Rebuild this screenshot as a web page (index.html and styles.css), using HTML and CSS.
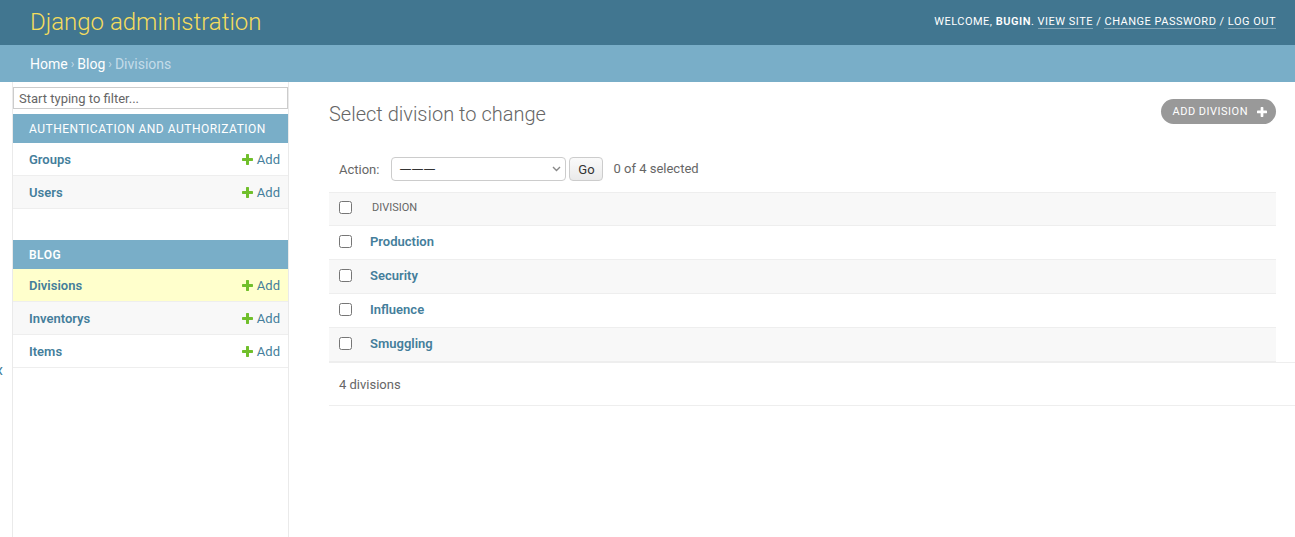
FILE: index.html
```html
<!DOCTYPE html>
<html lang="en">
<head>
<meta charset="utf-8">
<title>Select division to change | Django site admin</title>
<link rel="stylesheet" href="styles.css">
</head>
<body>
<header class="header">
  <div class="branding">Django administration</div>
  <div class="user-tools">
    Welcome, <strong>bugin</strong>.
    <a href="#">View site</a> /
    <a href="#">Change password</a> /
    <a href="#">Log out</a>
  </div>
</header>
<nav class="breadcrumbs">
  <a href="#">Home</a><span class="sep">›</span><a href="#">Blog</a><span class="sep">›</span><span>Divisions</span>
</nav>
<div class="main">
  <button class="toggle"><span class="toggle-glyph">«</span></button>
  <aside class="sidebar">
    <input class="filter" type="search" placeholder="Start typing to filter...">
    <div class="module">
      <div class="caption">Authentication and Authorization</div>
      <div class="app-row"><a class="model" href="#">Groups</a><a class="addlink" href="#"><svg width="11" height="11" viewBox="192 192 1408 1408"><path fill="#70bf2b" d="M1600 796v192q0 40-28 68t-68 28h-416v416q0 40-28 68t-68 28h-192q-40 0-68-28t-28-68v-416h-416q-40 0-68-28t-28-68v-192q0-40 28-68t68-28h416v-416q0-40 28-68t68-28h192q40 0 68 28t28 68v416h416q40 0 68 28t28 68z"/></svg>Add</a></div>
      <div class="app-row alt"><a class="model" href="#">Users</a><a class="addlink" href="#"><svg width="11" height="11" viewBox="192 192 1408 1408"><path fill="#70bf2b" d="M1600 796v192q0 40-28 68t-68 28h-416v416q0 40-28 68t-68 28h-192q-40 0-68-28t-28-68v-416h-416q-40 0-68-28t-28-68v-192q0-40 28-68t68-28h416v-416q0-40 28-68t68-28h192q40 0 68 28t28 68v416h416q40 0 68 28t28 68z"/></svg>Add</a></div>
    </div>
    <div class="module">
      <div class="caption bold">Blog</div>
      <div class="app-row current"><a class="model" href="#">Divisions</a><a class="addlink" href="#"><svg width="11" height="11" viewBox="192 192 1408 1408"><path fill="#70bf2b" d="M1600 796v192q0 40-28 68t-68 28h-416v416q0 40-28 68t-68 28h-192q-40 0-68-28t-28-68v-416h-416q-40 0-68-28t-28-68v-192q0-40 28-68t68-28h416v-416q0-40 28-68t68-28h192q40 0 68 28t28 68v416h416q40 0 68 28t28 68z"/></svg>Add</a></div>
      <div class="app-row alt"><a class="model" href="#">Inventorys</a><a class="addlink" href="#"><svg width="11" height="11" viewBox="192 192 1408 1408"><path fill="#70bf2b" d="M1600 796v192q0 40-28 68t-68 28h-416v416q0 40-28 68t-68 28h-192q-40 0-68-28t-28-68v-416h-416q-40 0-68-28t-28-68v-192q0-40 28-68t68-28h416v-416q0-40 28-68t68-28h192q40 0 68 28t28 68v416h416q40 0 68 28t28 68z"/></svg>Add</a></div>
      <div class="app-row"><a class="model" href="#">Items</a><a class="addlink" href="#"><svg width="11" height="11" viewBox="192 192 1408 1408"><path fill="#70bf2b" d="M1600 796v192q0 40-28 68t-68 28h-416v416q0 40-28 68t-68 28h-192q-40 0-68-28t-28-68v-416h-416q-40 0-68-28t-28-68v-192q0-40 28-68t68-28h416v-416q0-40 28-68t68-28h192q40 0 68 28t28 68v416h416q40 0 68 28t28 68z"/></svg>Add</a></div>
    </div>
  </aside>
  <main class="content">
    <div class="title-row">
      <h1 class="title">Select division to change</h1>
      <a class="add-button" href="#">Add division<svg width="10" height="10" viewBox="192 192 1408 1408"><path fill="#fff" d="M1600 796v192q0 40-28 68t-68 28h-416v416q0 40-28 68t-68 28h-192q-40 0-68-28t-28-68v-416h-416q-40 0-68-28t-28-68v-192q0-40 28-68t68-28h416v-416q0-40 28-68t68-28h192q40 0 68 28t28 68v416h416q40 0 68 28t28 68z"/></svg></a>
    </div>
    <div class="actions">
      <label class="action-label">Action:</label>
      <span class="select-wrap">
        <select class="action-select"><option>———</option></select>
        <svg class="chevron" width="9" height="6" viewBox="0 0 9 6"><path d="M1 1l3.5 3.5L8 1" fill="none" stroke="#888" stroke-width="1.4"/></svg>
      </span>
      <button class="go">Go</button>
      <span class="counter">0 of 4 selected</span>
    </div>
    <table class="result-list">
      <thead>
        <tr><th class="cb"><input type="checkbox"></th><th class="col">Division</th></tr>
      </thead>
      <tbody>
        <tr><td class="cb"><input type="checkbox"></td><th class="name"><a href="#">Production</a></th></tr>
        <tr class="alt"><td class="cb"><input type="checkbox"></td><th class="name"><a href="#">Security</a></th></tr>
        <tr><td class="cb"><input type="checkbox"></td><th class="name"><a href="#">Influence</a></th></tr>
        <tr class="alt"><td class="cb"><input type="checkbox"></td><th class="name"><a href="#">Smuggling</a></th></tr>
      </tbody>
    </table>
    <p class="paginator">4 divisions</p>
  </main>
</div>
</body>
</html>
```
FILE: styles.css
```css
html, body {
  margin: 0;
  padding: 0;
}
body {
  font-family: Roboto, "Liberation Sans", sans-serif;
  font-size: 14px;
  color: #333;
  background: #fff;
  overflow: hidden;
}
a {
  color: #447e9b;
  text-decoration: none;
}

.header {
  height: 45px;
  box-sizing: border-box;
  padding: 0 19px 0 30px;
  background: #417690;
  display: flex;
  align-items: center;
  justify-content: space-between;
}
.branding {
  font-size: 24px;
  font-weight: 300;
  color: #f5dd5d;
  margin-top: -2px;
}
.user-tools {
  font-size: 11px;
  letter-spacing: 0.5px;
  text-transform: uppercase;
  color: #fff;
  margin-top: -3px;
}
.user-tools strong {
  font-weight: 600;
}
.user-tools a {
  color: #fff;
  border-bottom: 1px solid rgba(255, 255, 255, 0.35);
}

.breadcrumbs {
  height: 37px;
  box-sizing: border-box;
  padding: 0 30px;
  background: #79aec8;
  color: #c4dce8;
  display: flex;
  align-items: center;
  font-size: 14px;
}
.breadcrumbs a {
  color: #fff;
}
.breadcrumbs .sep {
  margin: 0 3px;
  font-size: 12px;
}

.main {
  display: flex;
  min-height: calc(100vh - 82px);
}
.toggle {
  flex: 0 0 13px;
  width: 13px;
  box-sizing: border-box;
  padding: 282px 0 0 0;
  margin: 0;
  border: 0;
  border-right: 1px solid #eaeaea;
  background: #fff;
  overflow: hidden;
  display: flex;
  align-items: flex-start;
  font-family: Roboto, sans-serif;
  font-size: 20px;
  line-height: 12px;
  color: #447e9b;
}
.toggle-glyph {
  margin-left: -6px;
}

.sidebar {
  flex: 0 0 275px;
  width: 275px;
  border-right: 1px solid #eaeaea;
  display: flex;
  flex-direction: column;
}
.filter {
  margin: 5px 0 5px 0;
  height: 22px;
  box-sizing: border-box;
  border: 1px solid #ccc;
  padding: 0 5px;
  font-family: Roboto, sans-serif;
  font-size: 13px;
  color: #333;
  outline: none;
}
.filter::placeholder {
  color: #666;
}
.module {
  margin-bottom: 31px;
}
.caption {
  height: 29px;
  box-sizing: border-box;
  padding: 0 16px;
  display: flex;
  align-items: center;
  background: #79aec8;
  color: #fff;
  font-size: 12px;
  letter-spacing: 0.5px;
  text-transform: uppercase;
  white-space: nowrap;
}
.caption.bold {
  font-weight: 600;
}
.app-row {
  height: 33px;
  box-sizing: border-box;
  border-bottom: 1px solid #eee;
  padding: 0 8px 0 16px;
  display: flex;
  align-items: center;
  justify-content: space-between;
  font-size: 13px;
  background: #fff;
}
.app-row.alt {
  background: #f8f8f8;
}
.app-row.current {
  background: #ffc;
}
.model {
  font-weight: 600;
}
.addlink {
  display: flex;
  align-items: center;
  gap: 4px;
}

.content {
  flex: 1;
  padding: 20px 19px 0 40px;
  min-width: 0;
}
.title-row {
  display: flex;
  justify-content: space-between;
  align-items: flex-start;
  margin-bottom: 20px;
}
.title {
  margin: 0;
  font-size: 20px;
  font-weight: 300;
  line-height: 24px;
  color: #666;
}
.add-button {
  margin-top: -3px;
  height: 25px;
  box-sizing: border-box;
  padding: 0 9px 0 12px;
  border-radius: 15px;
  background: #999;
  color: #fff;
  font-size: 11px;
  letter-spacing: 0.5px;
  text-transform: uppercase;
  display: flex;
  align-items: center;
  gap: 9px;
}

.actions {
  height: 46px;
  box-sizing: border-box;
  padding: 0 10px;
  display: flex;
  align-items: center;
  font-size: 13px;
  color: #666;
}
.action-label {
  margin-right: 12px;
}
.select-wrap {
  position: relative;
  display: flex;
}
.action-select {
  appearance: none;
  -webkit-appearance: none;
  width: 175px;
  height: 24px;
  border: 1px solid #ccc;
  border-radius: 4px;
  background: #fff;
  font-family: "DejaVu Sans", sans-serif;
  font-size: 12px;
  color: #333;
  padding: 0 7px;
}
.chevron {
  position: absolute;
  right: 5px;
  top: 9px;
}
.go {
  margin-left: 3px;
  width: 34px;
  height: 24px;
  border: 1px solid #ccc;
  border-radius: 4px;
  background: linear-gradient(#fafafa, #eaeaea);
  font-family: Roboto, sans-serif;
  font-size: 13px;
  color: #333;
  padding: 0;
}
.counter {
  margin-left: 10px;
  margin-top: -2px;
}

.result-list {
  width: 100%;
  border-collapse: collapse;
  font-size: 13px;
}
.result-list thead th {
  height: 29px;
  background: #f8f8f8;
  border-top: 1px solid #eee;
  border-bottom: 1px solid #eee;
  text-align: left;
  font-size: 11px;
  font-weight: 400;
  text-transform: uppercase;
  color: #666;
  padding: 0 0 3px 0;
}
.result-list .cb {
  width: 13px;
  padding-left: 10px;
  padding-right: 8px;
  vertical-align: middle;
}
.result-list input[type="checkbox"] {
  margin: 0;
  width: 13px;
  height: 13px;
  display: block;
}
.result-list thead input[type="checkbox"] {
  margin-bottom: 1px;
}
.result-list th.col {
  padding-left: 12px;
}
.result-list tbody td,
.result-list tbody th {
  height: 31px;
  border-bottom: 1px solid #eee;
  padding-top: 0;
  padding-bottom: 2px;
}
.result-list tbody th.name {
  text-align: left;
  font-weight: 600;
  padding-left: 10px;
}
.result-list tbody tr.alt {
  background: #f8f8f8;
}

.paginator {
  margin: 0 -19px 0 0;
  height: 44px;
  box-sizing: border-box;
  padding: 0 10px;
  border-top: 1px solid #eee;
  border-bottom: 1px solid #eee;
  display: flex;
  align-items: center;
  font-size: 13px;
  color: #666;
}
```
